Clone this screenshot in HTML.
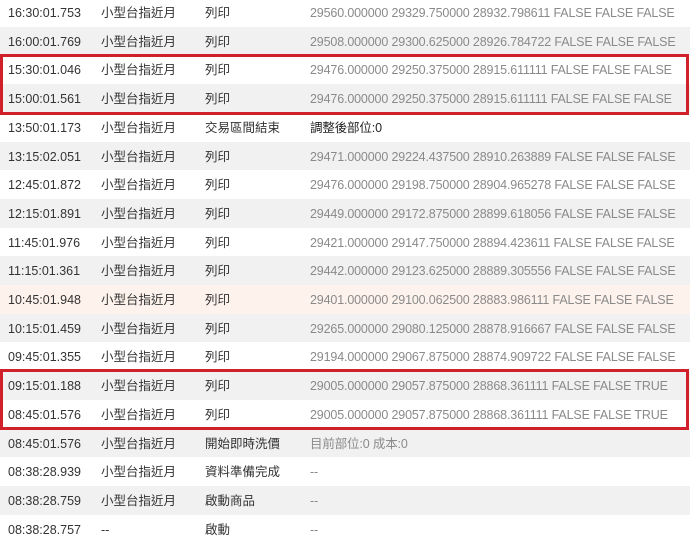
<!DOCTYPE html>
<html><head><meta charset="utf-8"><style>
body{margin:0;width:690px;height:541px;overflow:hidden;background:#fff;font-family:"Liberation Sans","Noto Sans CJK TC",sans-serif;font-size:12.5px;position:relative}
.r{position:absolute;left:0;width:690px;height:28.7px;line-height:30px;color:#333}
.r.g{background:#f1f1f1}.r.h{background:#fdf3ec}
.r span{position:absolute;top:0;white-space:nowrap}
.a{left:8px}.b{left:101px}.c{left:205px}.d{left:310px;color:#8a8a8a;letter-spacing:-0.15px}.d.k{color:#222}
.box{position:absolute;left:0;width:683px;border:3px solid #d0202a;box-sizing:content-box}
</style></head><body>
<div class="r" style="top:-2px"><span class="a">16:30:01.753</span><span class="b">小型台指近月</span><span class="c">列印</span><span class="d">29560.000000 29329.750000 28932.798611 FALSE FALSE FALSE</span></div>
<div class="r g" style="top:26.7px"><span class="a">16:00:01.769</span><span class="b">小型台指近月</span><span class="c">列印</span><span class="d">29508.000000 29300.625000 28926.784722 FALSE FALSE FALSE</span></div>
<div class="r" style="top:55.4px"><span class="a">15:30:01.046</span><span class="b">小型台指近月</span><span class="c">列印</span><span class="d">29476.000000 29250.375000 28915.611111 FALSE FALSE FALSE</span></div>
<div class="r g" style="top:84.1px"><span class="a">15:00:01.561</span><span class="b">小型台指近月</span><span class="c">列印</span><span class="d">29476.000000 29250.375000 28915.611111 FALSE FALSE FALSE</span></div>
<div class="r" style="top:112.8px"><span class="a">13:50:01.173</span><span class="b">小型台指近月</span><span class="c">交易區間結束</span><span class="d k">調整後部位:0</span></div>
<div class="r g" style="top:141.5px"><span class="a">13:15:02.051</span><span class="b">小型台指近月</span><span class="c">列印</span><span class="d">29471.000000 29224.437500 28910.263889 FALSE FALSE FALSE</span></div>
<div class="r" style="top:170.2px"><span class="a">12:45:01.872</span><span class="b">小型台指近月</span><span class="c">列印</span><span class="d">29476.000000 29198.750000 28904.965278 FALSE FALSE FALSE</span></div>
<div class="r g" style="top:198.9px"><span class="a">12:15:01.891</span><span class="b">小型台指近月</span><span class="c">列印</span><span class="d">29449.000000 29172.875000 28899.618056 FALSE FALSE FALSE</span></div>
<div class="r" style="top:227.6px"><span class="a">11:45:01.976</span><span class="b">小型台指近月</span><span class="c">列印</span><span class="d">29421.000000 29147.750000 28894.423611 FALSE FALSE FALSE</span></div>
<div class="r g" style="top:256.3px"><span class="a">11:15:01.361</span><span class="b">小型台指近月</span><span class="c">列印</span><span class="d">29442.000000 29123.625000 28889.305556 FALSE FALSE FALSE</span></div>
<div class="r h" style="top:285px"><span class="a">10:45:01.948</span><span class="b">小型台指近月</span><span class="c">列印</span><span class="d">29401.000000 29100.062500 28883.986111 FALSE FALSE FALSE</span></div>
<div class="r g" style="top:313.7px"><span class="a">10:15:01.459</span><span class="b">小型台指近月</span><span class="c">列印</span><span class="d">29265.000000 29080.125000 28878.916667 FALSE FALSE FALSE</span></div>
<div class="r" style="top:342.4px"><span class="a">09:45:01.355</span><span class="b">小型台指近月</span><span class="c">列印</span><span class="d">29194.000000 29067.875000 28874.909722 FALSE FALSE FALSE</span></div>
<div class="r g" style="top:371.1px"><span class="a">09:15:01.188</span><span class="b">小型台指近月</span><span class="c">列印</span><span class="d">29005.000000 29057.875000 28868.361111 FALSE FALSE TRUE</span></div>
<div class="r" style="top:399.8px"><span class="a">08:45:01.576</span><span class="b">小型台指近月</span><span class="c">列印</span><span class="d">29005.000000 29057.875000 28868.361111 FALSE FALSE TRUE</span></div>
<div class="r g" style="top:428.5px"><span class="a">08:45:01.576</span><span class="b">小型台指近月</span><span class="c">開始即時洗價</span><span class="d">目前部位:0 成本:0</span></div>
<div class="r" style="top:457.2px"><span class="a">08:38:28.939</span><span class="b">小型台指近月</span><span class="c">資料準備完成</span><span class="d">--</span></div>
<div class="r g" style="top:485.9px"><span class="a">08:38:28.759</span><span class="b">小型台指近月</span><span class="c">啟動商品</span><span class="d">--</span></div>
<div class="r" style="top:514.6px"><span class="a">08:38:28.757</span><span class="b">--</span><span class="c">啟動</span><span class="d">--</span></div>
<div class="box" style="top:54px;height:55px"></div>
<div class="box" style="top:369px;height:55px"></div>
</body></html>
